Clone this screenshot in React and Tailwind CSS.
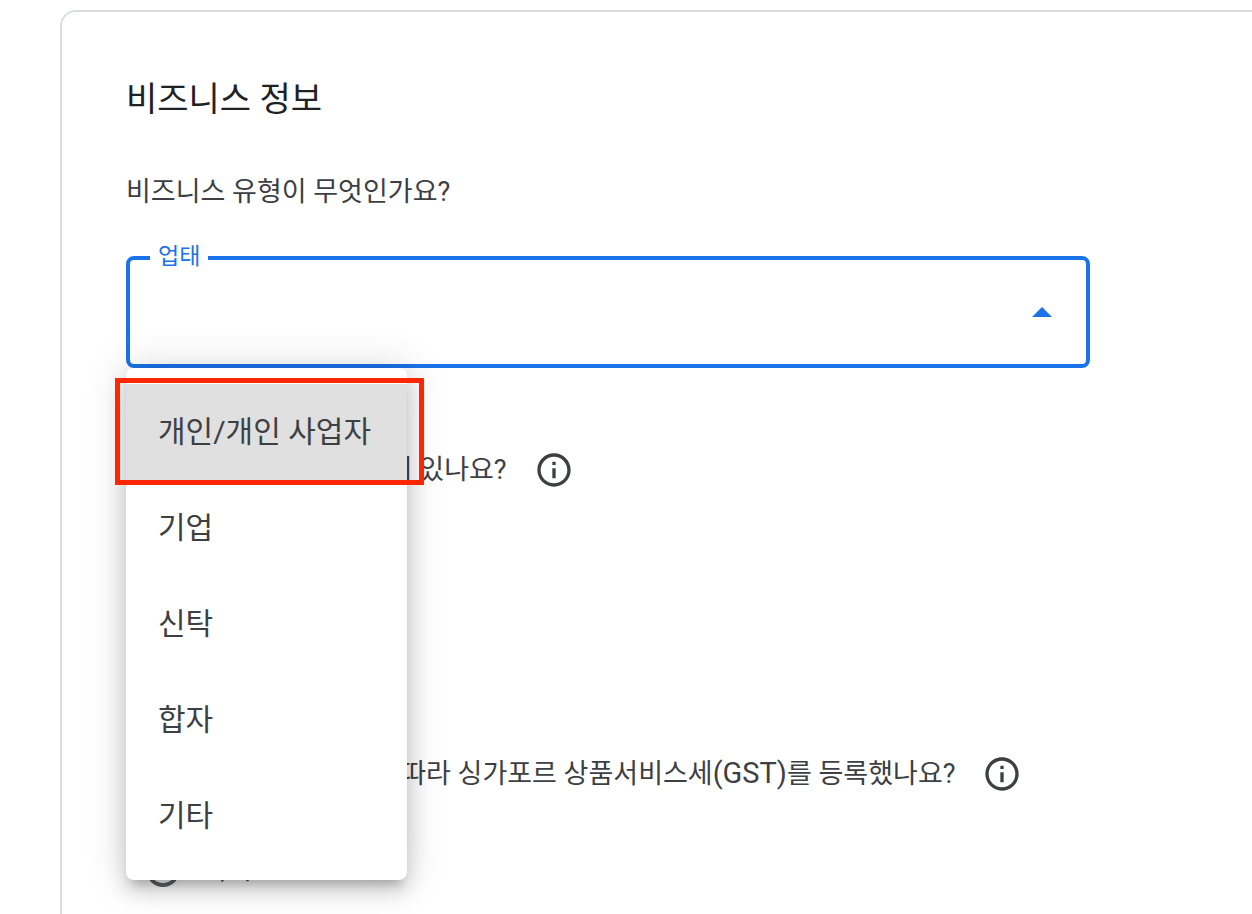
import { useState } from "react";

const OPTIONS = ["개인/개인 사업자", "기업", "신탁", "합자", "기타"];

function InfoButton() {
  return (
    <button type="button" aria-label="자세히 알아보기" className="size-10 shrink-0 text-[#3c4043]">
      <svg viewBox="0 0 24 24" className="size-10 fill-current" aria-hidden="true">
        <path d="M11 7h2v2h-2zm0 4h2v6h-2zm1-9C6.48 2 2 6.48 2 12s4.48 10 10 10 10-4.48 10-10S17.52 2 12 2zm0 18c-4.41 0-8-3.59-8-8s3.59-8 8-8 8 3.59 8 8-3.59 8-8 8z" />
      </svg>
    </button>
  );
}

function Question({ name, text, answers, className }) {
  return (
    <fieldset className={className}>
      <legend className="flex h-11 items-center gap-[27px] whitespace-nowrap">
        <span>{text}</span>
        <InfoButton />
      </legend>
      <div className="pt-[26px] pl-5">
        {answers.map((answer) => (
          <label key={answer} className="flex h-24 items-center gap-6 text-[26px]">
            <input
              type="radio"
              name={name}
              className="size-[34px] appearance-none rounded-full border-4 border-[#5f6368] bg-white checked:border-[10px] checked:border-[#1a73e8]"
            />
            {answer}
          </label>
        ))}
      </div>
    </fieldset>
  );
}

function BusinessTypeField() {
  const [value, setValue] = useState("");
  return (
    <div className="relative mt-11 w-full max-w-[964px]">
      <select
        id="business-type"
        value={value}
        onChange={(e) => setValue(e.target.value)}
        className="block h-28 w-full appearance-none rounded-lg border-4 border-[#1a73e8] bg-white px-7 text-[30px] outline-none"
      >
        <option value="" />
        {OPTIONS.map((o) => (
          <option key={o}>{o}</option>
        ))}
      </select>
      <label
        htmlFor="business-type"
        className="absolute -top-4 left-6 bg-white px-2 text-[23px] leading-[34px] text-[#1a73e8]"
      >
        업태
      </label>
      <svg
        viewBox="0 0 20 10"
        className="pointer-events-none absolute top-[51px] right-[38px] h-[10px] w-5 fill-[#1a73e8]"
        aria-hidden="true"
      >
        <path d="M0 10 10 0l10 10z" />
      </svg>
      <ul
        aria-label="업태"
        className="absolute top-full left-0 z-10 w-[281px] rounded-lg bg-white py-4 shadow-[0_10px_10px_-6px_rgba(0,0,0,0.2),0_10px_20px_2px_rgba(0,0,0,0.14),0_0_40px_4px_rgba(0,0,0,0.12)]"
      >
        {OPTIONS.map((o, i) => (
          <li key={o}>
            <button
              type="button"
              onClick={() => setValue(o)}
              className={`h-24 w-full px-8 pb-0.5 text-left text-[30px] whitespace-nowrap ${i === 0 ? "bg-[#e0e0e0]" : "bg-white"}`}
            >
              {o}
            </button>
          </li>
        ))}
      </ul>
      <div className="pointer-events-none absolute top-[122px] -left-[11px] z-20 h-[107px] w-[309px] border-[5px] border-[#ff2600]" />
    </div>
  );
}

export default function App() {
  return (
    <main className="h-screen overflow-y-auto overflow-x-hidden [scrollbar-width:none] bg-white pt-[10px] pl-[60px] font-['Roboto','Noto_Sans_CJK_KR',sans-serif] text-[27px] text-[#3c4043]">
      <section className="rounded-tl-2xl border-t-2 border-l-2 border-[#dadce0] px-16 pt-16 pb-16">
        <h1 className="text-[34px] leading-[46px] text-[#202124]">비즈니스 정보</h1>
        <p className="mt-[50px] leading-10">비즈니스 유형이 무엇인가요?</p>
        <BusinessTypeField />
        <Question
          name="presence"
          text="귀하의 싱가포르 사업장이 있나요?"
          answers={["아니요", "예"]}
          className="mt-20"
        />
        <Question
          name="gst"
          text={
            <>
              귀사는 현지 관련 세법에 따라 싱가포르 상품서비스세
              <span className="text-[29px]">(GST)</span>를 등록했나요?
            </>
          }
          answers={["아니요"]}
          className="mt-[42px]"
        />
      </section>
    </main>
  );
}
